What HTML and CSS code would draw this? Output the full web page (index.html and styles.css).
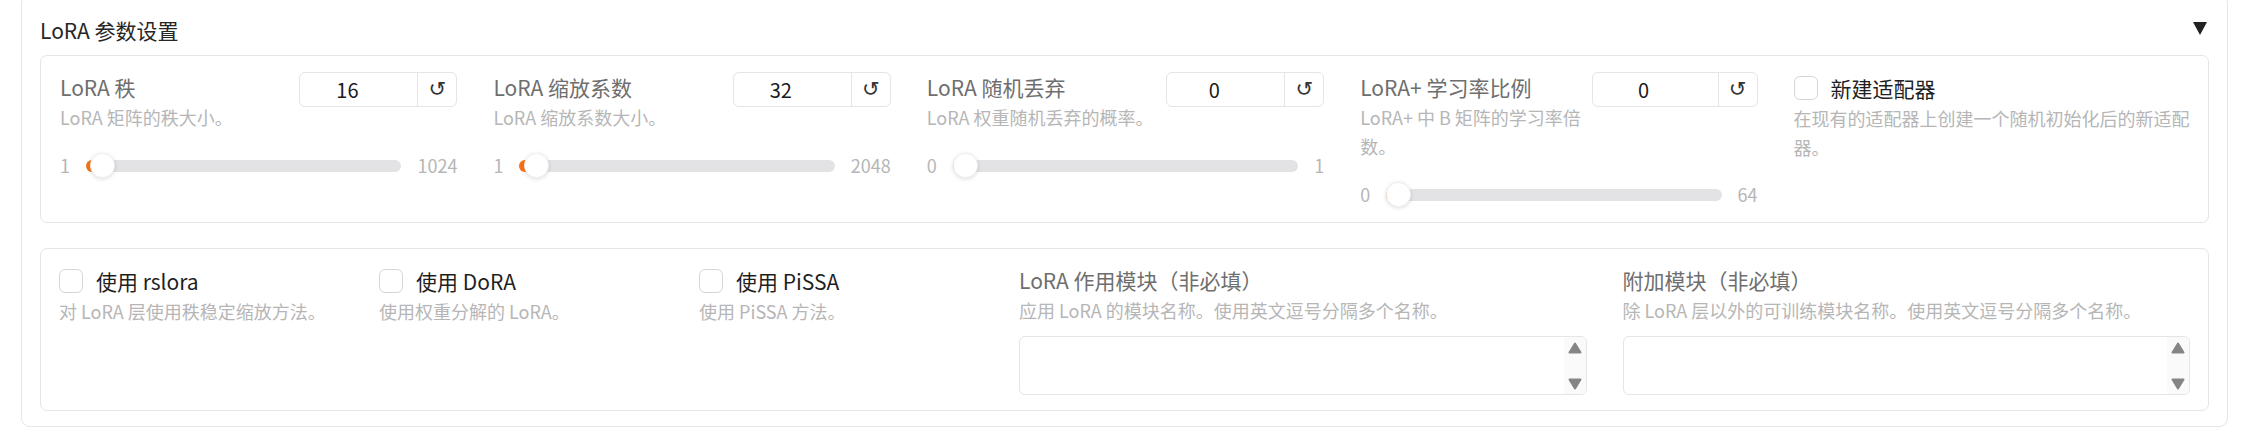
FILE: index.html
```html
<!DOCTYPE html>
<html lang="zh-CN">
<head>
<meta charset="utf-8">
<title>LoRA 参数设置</title>
<link rel="stylesheet" href="styles.css">
</head>
<body>
<div class="page">
  <div class="accordion">
    <div class="acc-head">
      <span class="acc-title">LoRA 参数设置</span>
      <svg class="acc-icon" width="14" height="13" viewBox="0 0 14 13"><polygon points="0,0 14,0 7,13" fill="#222"/></svg>
    </div>

    <div class="panel panel-a">
      <div class="cell-a">
        <div class="num-head">
          <div class="num-text">
            <span class="label">LoRA 秩</span>
            <span class="info">LoRA 矩阵的秩大小。</span>
          </div>
          <div class="num-box">
            <div class="num-val">16</div>
            <div class="reset">↺</div>
          </div>
        </div>
        <div class="slider">
          <span class="mm">1</span>
          <div class="track" style="--p:0.0147"><div class="fill"></div><div class="thumb"></div></div>
          <span class="mm">1024</span>
        </div>
      </div>

      <div class="cell-a">
        <div class="num-head">
          <div class="num-text">
            <span class="label">LoRA 缩放系数</span>
            <span class="info">LoRA 缩放系数大小。</span>
          </div>
          <div class="num-box">
            <div class="num-val">32</div>
            <div class="reset">↺</div>
          </div>
        </div>
        <div class="slider">
          <span class="mm">1</span>
          <div class="track" style="--p:0.0151"><div class="fill"></div><div class="thumb"></div></div>
          <span class="mm">2048</span>
        </div>
      </div>

      <div class="cell-a">
        <div class="num-head">
          <div class="num-text">
            <span class="label">LoRA 随机丢弃</span>
            <span class="info">LoRA 权重随机丢弃的概率。</span>
          </div>
          <div class="num-box">
            <div class="num-val">0</div>
            <div class="reset">↺</div>
          </div>
        </div>
        <div class="slider">
          <span class="mm">0</span>
          <div class="track" style="--p:0"><div class="fill"></div><div class="thumb"></div></div>
          <span class="mm">1</span>
        </div>
      </div>

      <div class="cell-a">
        <div class="num-head">
          <div class="num-text">
            <span class="label">LoRA+ 学习率比例</span>
            <span class="info">LoRA+ 中 B 矩阵的学习率倍数。</span>
          </div>
          <div class="num-box num-box-wide">
            <div class="num-val">0</div>
            <div class="reset">↺</div>
          </div>
        </div>
        <div class="slider">
          <span class="mm">0</span>
          <div class="track" style="--p:0"><div class="fill"></div><div class="thumb"></div></div>
          <span class="mm">64</span>
        </div>
      </div>

      <div class="cell-a">
        <div class="check-row">
          <span class="box"></span>
          <span class="check-label">新建适配器</span>
        </div>
        <span class="info">在现有的适配器上创建一个随机初始化后的新适配器。</span>
      </div>
    </div>

    <div class="panel panel-b">
      <div class="cell-b">
        <div class="check-row">
          <span class="box"></span>
          <span class="check-label">使用 rslora</span>
        </div>
        <span class="info">对 LoRA 层使用秩稳定缩放方法。</span>
      </div>
      <div class="cell-b">
        <div class="check-row">
          <span class="box"></span>
          <span class="check-label">使用 DoRA</span>
        </div>
        <span class="info">使用权重分解的 LoRA。</span>
      </div>
      <div class="cell-b">
        <div class="check-row">
          <span class="box"></span>
          <span class="check-label">使用 PiSSA</span>
        </div>
        <span class="info">使用 PiSSA 方法。</span>
      </div>
      <div class="cell-b">
        <span class="label">LoRA 作用模块（非必填）</span>
        <span class="info">应用 LoRA 的模块名称。使用英文逗号分隔多个名称。</span>
        <div class="ta">
          <div class="ta-body"></div>
          <div class="ta-bar">
            <svg width="14" height="12" viewBox="0 0 14 12"><polygon points="7,1.5 12.5,10.5 1.5,10.5" fill="#858585" stroke="#858585" stroke-width="2" stroke-linejoin="round"/></svg>
            <svg width="14" height="12" viewBox="0 0 14 12"><polygon points="1.5,1.5 12.5,1.5 7,10.5" fill="#858585" stroke="#858585" stroke-width="2" stroke-linejoin="round"/></svg>
          </div>
        </div>
      </div>
      <div class="cell-b">
        <span class="label">附加模块（非必填）</span>
        <span class="info">除 LoRA 层以外的可训练模块名称。使用英文逗号分隔多个名称。</span>
        <div class="ta">
          <div class="ta-body"></div>
          <div class="ta-bar">
            <svg width="14" height="12" viewBox="0 0 14 12"><polygon points="7,1.5 12.5,10.5 1.5,10.5" fill="#858585" stroke="#858585" stroke-width="2" stroke-linejoin="round"/></svg>
            <svg width="14" height="12" viewBox="0 0 14 12"><polygon points="1.5,1.5 12.5,1.5 7,10.5" fill="#858585" stroke="#858585" stroke-width="2" stroke-linejoin="round"/></svg>
          </div>
        </div>
      </div>
    </div>
  </div>
</div>
</body>
</html>
```

FILE: styles.css
```css
* {
  box-sizing: border-box;
}

body {
  margin: 0;
  background: #ffffff;
  font-family: "Noto Sans CJK SC", "Noto Sans", sans-serif;
  color: #1f1f1f;
}

.page {
  padding: 0 28px 0 21px;
}

.accordion {
  margin-top: -6px;
  border: 1px solid #e5e5e5;
  border-radius: 9px;
  padding: 20px 18px 15px 18px;
  background: #ffffff;
}

.acc-head {
  display: flex;
  justify-content: space-between;
  align-items: center;
  height: 31px;
  margin-bottom: 9px;
}

.acc-title {
  font-size: 21px;
  line-height: 31px;
  color: #262626;
}

.acc-icon {
  display: block;
  margin-right: 2px;
  margin-bottom: 4px;
}

.panel {
  display: grid;
  border: 1px solid #e5e5e5;
  border-radius: 7px;
  padding: 16px 0 15px;
}

.panel-a {
  grid-template-columns: repeat(5, 1fr);
}

.panel-b {
  grid-template-columns: 320px 320px 320px 1fr 1fr;
  margin-top: 25px;
}

.cell-a {
  padding: 0 17px 0 19px;
  min-width: 0;
}

.cell-b {
  padding: 0 18px;
  min-width: 0;
}

.label {
  display: block;
  font-size: 21px;
  line-height: 31px;
  color: #6e6e6e;
}

.info {
  display: block;
  font-size: 18px;
  line-height: 29px;
  color: #b6b6b6;
}

/* number input header */
.num-head {
  display: flex;
  align-items: flex-start;
  gap: 4px;
}

.num-text {
  flex: 1;
  min-width: 0;
}

.num-box {
  display: flex;
  flex: none;
  width: 158px;
  height: 35px;
  border: 1px solid #e5e5e5;
  border-radius: 6px;
  background: #ffffff;
}

.num-box-wide {
  width: 166px;
}

.num-val {
  flex: 1;
  text-align: center;
  padding-right: 23px;
  font-size: 20px;
  line-height: 33px;
  color: #1a1a1a;
}

.reset {
  width: 39px;
  flex: none;
  border-left: 1px solid #e5e5e5;
  text-align: center;
  font-family: "DejaVu Sans", sans-serif;
  font-size: 21px;
  line-height: 33px;
  color: #333333;
}

/* slider */
.slider {
  display: flex;
  align-items: center;
  gap: 16px;
  height: 25px;
  margin-top: 21px;
}

.mm {
  font-size: 18px;
  line-height: 25px;
  color: #b6b6b6;
  flex: none;
}

.track {
  flex: 1;
  height: 12px;
  border-radius: 6px;
  background: #e3e3e5;
  position: relative;
}

.fill {
  position: absolute;
  left: 0;
  top: 0;
  bottom: 0;
  width: calc(var(--p) * (100% - 25px) + 12.5px);
  border-radius: 6px;
  background: #f97316;
}

.thumb {
  position: absolute;
  top: 50%;
  margin-top: -12.5px;
  left: calc(var(--p) * (100% - 25px));
  width: 25px;
  height: 25px;
  border-radius: 50%;
  background: #ffffff;
  border: 1px solid #f0f0f0;
  box-shadow: 0 1px 4px rgba(0, 0, 0, 0.14);
}

/* checkbox */
.check-row {
  display: flex;
  align-items: center;
  gap: 13px;
  height: 32px;
}

.box {
  width: 24px;
  height: 24px;
  flex: none;
  border: 1px solid #d6d6d6;
  border-radius: 6px;
  background: #ffffff;
}

.check-label {
  font-size: 21px;
  line-height: 32px;
  color: #1f1f1f;
}

/* textarea */
.ta {
  display: flex;
  height: 59px;
  margin-top: 11px;
  border: 1px solid #e5e5e5;
  border-radius: 6px;
  overflow: hidden;
  background: #ffffff;
}

.ta-body {
  flex: 1;
}

.ta-bar {
  width: 22px;
  flex: none;
  background: #fafafa;
  display: flex;
  flex-direction: column;
  justify-content: space-between;
  align-items: center;
  padding: 5px 0 4px;
}

.ta-bar svg {
  display: block;
}
```
